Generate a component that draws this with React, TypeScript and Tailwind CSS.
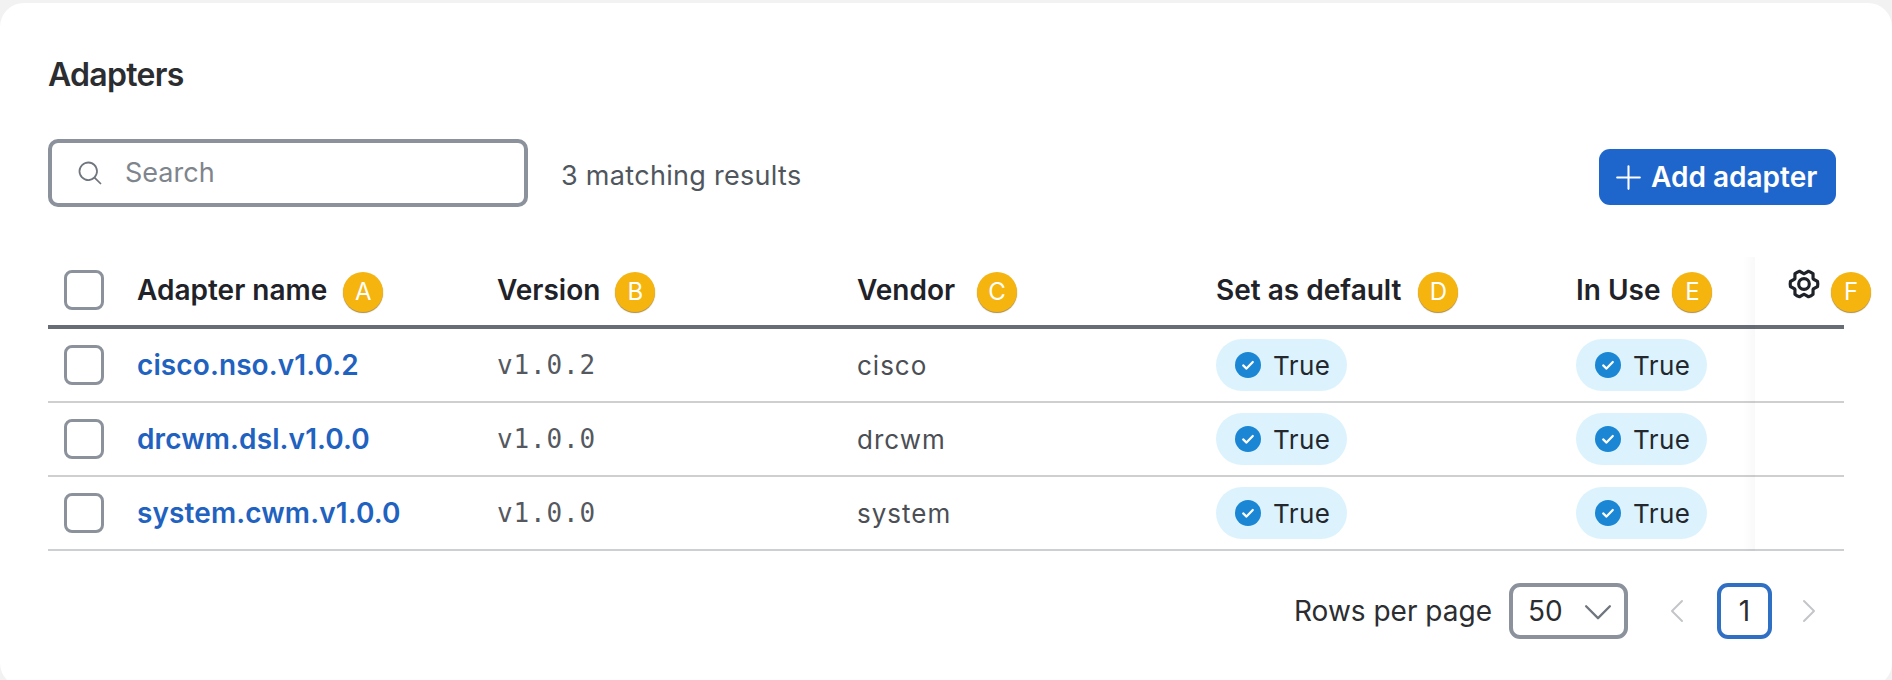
import { PiGearSixBold, PiMagnifyingGlass, PiPlus, PiCaretDown, PiCaretLeft, PiCaretRight } from "react-icons/pi";

const inter = { fontFamily: "Inter, sans-serif" };

const rows = [
  { name: "cisco.nso.v1.0.2", version: "v1.0.2", vendor: "cisco" },
  { name: "drcwm.dsl.v1.0.0", version: "v1.0.0", vendor: "drcwm" },
  { name: "system.cwm.v1.0.0", version: "v1.0.0", vendor: "system" },
];

function Checkbox() {
  return <span className="block h-10 w-10 rounded-lg border-[3.5px] border-[#8b929b] bg-white" />;
}

function Marker({ letter }: { letter: string }) {
  return (
    <span className="flex h-10 w-10 shrink-0 items-center justify-center rounded-full bg-[#f6b40e] pb-px text-[24px] font-normal text-white shadow-[0_1px_1px_#a8894a]">
      {letter}
    </span>
  );
}

function TrueBadge() {
  return (
    <span className="inline-flex h-[52px] w-[131px] items-center rounded-full bg-[#dcf3fe] pl-[19px] text-[26px] tracking-[0.4px] text-[#23282e]">
      <svg viewBox="0 0 26 26" className="mr-[12px] h-[26px] w-[26px] shrink-0">
        <circle cx="13" cy="13" r="13" fill="#1a86d4" />
        <path d="M8.2 13.4l3.3 3.2 6.3-6.6" fill="none" stroke="#fff" strokeWidth="2.2" strokeLinecap="round" strokeLinejoin="round" />
      </svg>
      True
    </span>
  );
}

function HeaderCell({ label, letter, gap }: { label: string; letter: string; gap: string }) {
  return (
    <div className={`flex h-full items-center whitespace-nowrap ${gap}`}>
      <span className="text-[28px] font-semibold text-[#1f2329]">{label}</span>
      <span className="mt-[4px]">
        <Marker letter={letter} />
      </span>
    </div>
  );
}

export default function App() {
  return (
    <div className="h-[680px] overflow-hidden bg-[#f2f2f2] pt-[3px]" style={inter}>
      <div className="h-[684px] rounded-[24px] bg-white pl-12 pr-12">
        <h1 className="pt-[52px] text-[32px] leading-[40px] font-semibold tracking-[-0.7px] text-[#2b2d31]">Adapters</h1>

        {/* toolbar */}
        <div className="mt-[44px] flex h-[68px] items-center">
          <div className="flex h-[68px] w-[480px] items-center rounded-[10px] border-[4px] border-[#8b929b] pl-[24px]">
            <PiMagnifyingGlass className="h-[28px] w-[28px] text-[#70767d]" />
            <span className="ml-[21px] text-[27px] text-[#7f858c]">Search</span>
          </div>
          <span className="mt-[7px] ml-[33px] text-[27px] tracking-[0.3px] text-[#50565d]">3 matching results</span>
          <button className="mt-[8px] mr-2 ml-auto flex h-14 w-[237px] items-center rounded-[11px] bg-[#1f66cc] pl-[13px] text-[28px] font-semibold whitespace-nowrap text-white">
            <PiPlus className="mr-[6px] h-[33px] w-[33px]" />
            Add adapter
          </button>
        </div>

        {/* table */}
        <div className="relative mt-[43px]">
          <div className="grid h-[79px] grid-cols-[89px_360px_360px_359px_360px_179px_89px] border-b-4 border-[#676d75] pt-[5px]">
            <div className="flex items-center pl-4">
              <Checkbox />
            </div>
            <HeaderCell label="Adapter name" letter="A" gap="gap-[16px]" />
            <HeaderCell label="Version" letter="B" gap="gap-[15px]" />
            <HeaderCell label="Vendor" letter="C" gap="gap-[22px]" />
            <HeaderCell label="Set as default" letter="D" gap="gap-[17px]" />
            <HeaderCell label="In Use" letter="E" gap="gap-[12px]" />
            <div className="flex h-full items-center pl-[32px]">
              <PiGearSixBold className="mt-[-12px] h-[34px] w-[34px] shrink-0 text-[#1f2329]" />
              <span className="mt-[4px] ml-[10px]">
                <Marker letter="F" />
              </span>
            </div>
          </div>
          {rows.map((r) => (
            <div key={r.name} className="grid h-[74px] grid-cols-[89px_360px_360px_359px_360px_179px_89px] border-b-2 border-[#cdcfd1]">
              <div className="flex items-center pl-4">
                <Checkbox />
              </div>
              <div className="flex items-center text-[28px] font-semibold tracking-[0.1px] text-[#1f62bf]">{r.name}</div>
              <div className="flex items-center text-[26px] tracking-[0.85px] text-[#55595f]" style={{ fontFamily: "'DejaVu Sans Mono', monospace" }}>
                {r.version}
              </div>
              <div className="flex items-center text-[26px] tracking-[1px] text-[#4b4f55]">{r.vendor}</div>
              <div className="flex items-center">
                <TrueBadge />
              </div>
              <div className="flex items-center">
                <TrueBadge />
              </div>
              <div />
            </div>
          ))}

          {/* shadow of the sticky last column */}
          <div className="absolute top-[7px] bottom-0 left-[1695px] w-[12px] bg-gradient-to-r from-transparent to-black/[0.025]" />
        </div>

        {/* pagination */}
        <div className="mt-[32px] flex h-14 items-center text-[28px] text-[#2b2d31]">
          <span className="ml-[1246px]">Rows per page</span>
          <div className="ml-[17px] flex h-14 w-[119px] items-center rounded-[11px] border-[4px] border-[#8b929b] pl-[15px]">
            <span>50</span>
            <PiCaretDown className="ml-[16px] h-[38px] w-[38px] shrink-0 text-[#70767d]" />
          </div>
          <PiCaretLeft className="ml-[34px] h-[32px] w-[32px] text-[#c3c6c9]" />
          <div className="ml-[23px] flex h-14 w-[55px] items-center justify-center rounded-[11px] border-[4px] border-[#2f6fc4]">1</div>
          <PiCaretRight className="ml-[20px] h-[32px] w-[32px] text-[#c3c6c9]" />
        </div>
      </div>
    </div>
  );
}
